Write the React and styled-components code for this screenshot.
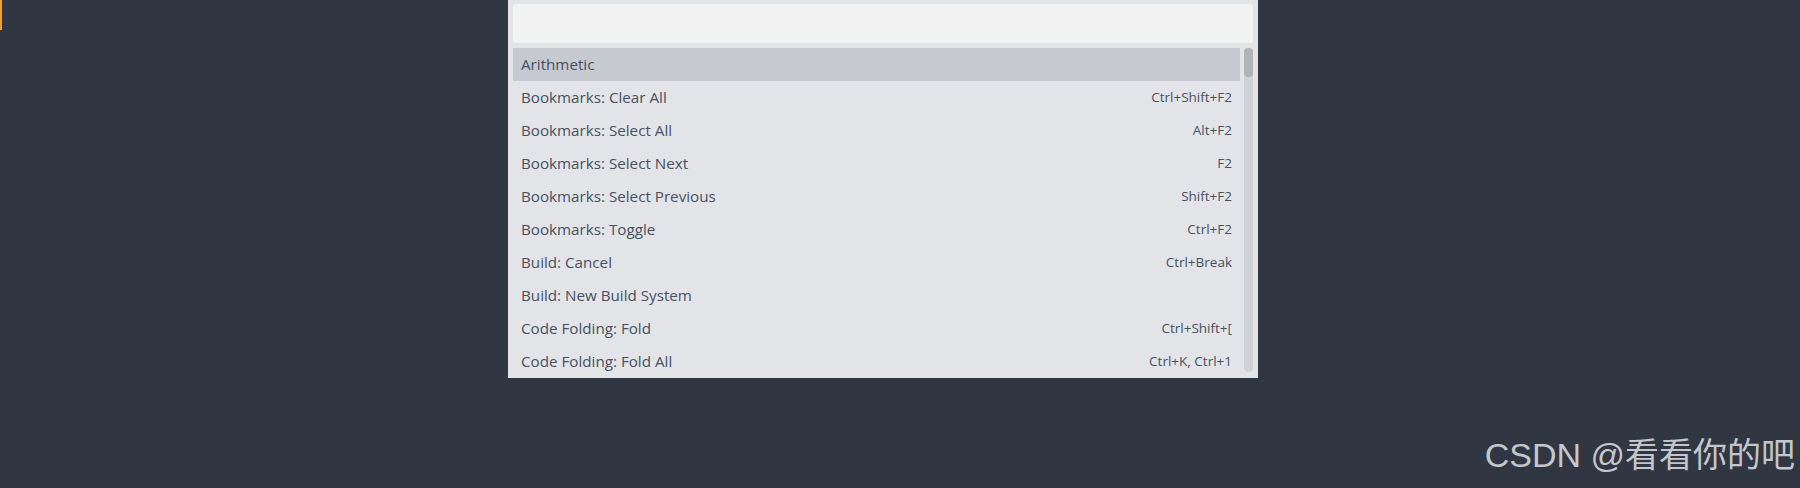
import React from 'react';
import styled, { createGlobalStyle } from 'styled-components';

const GlobalStyle = createGlobalStyle`
  html, body {
    margin: 0;
    padding: 0;
    background: #303742;
    height: 488px;
    overflow: hidden;
  }
`;

const Screen = styled.div`
  position: relative;
  width: 1800px;
  height: 488px;
  background: #303742;
  display: flex;
  justify-content: center;
  align-items: flex-start;
`;

const Caret = styled.div`
  position: absolute;
  left: 0;
  top: 0;
  width: 2px;
  height: 30px;
  background: #f0a030;
`;

const Palette = styled.div`
  width: 750px;
  margin-left: -34px;
  background: #e3e4e7;
  padding: 4px 5px 0 5px;
  box-sizing: border-box;
  display: flex;
  flex-direction: column;
  gap: 5px;
`;

const Input = styled.div`
  height: 39px;
  background: #f2f2f2;
  border-radius: 3px;
`;

const Body = styled.div`
  display: flex;
  gap: 4px;
`;

const List = styled.ul`
  flex: 1;
  margin: 0;
  padding: 0;
  list-style: none;
`;

const Row = styled.li`
  height: 33px;
  box-sizing: border-box;
  display: flex;
  align-items: center;
  justify-content: space-between;
  padding: 0 8px 2px 8px;
  background: ${p => (p.$selected ? '#c6c9d0' : 'transparent')};
  font-family: 'Open Sans', 'Noto Sans', sans-serif;
  color: #465261;
`;

const Label = styled.span`
  font-size: 15.2px;
`;

const Keys = styled.span`
  font-size: 13.5px;
`;

const Track = styled.div`
  width: 9px;
  height: 324px;
  background: #cfd2d6;
  border-radius: 4px;
  display: flex;
  flex-direction: column;
`;

const Thumb = styled.div`
  height: 29px;
  background: #b1b4b9;
  border-radius: 4px;
`;

const Watermark = styled.div`
  position: absolute;
  right: 5px;
  bottom: 11px;
  font-family: 'Liberation Sans', 'Noto Sans CJK SC', sans-serif;
  font-size: 34px;
  color: #c3c6ca;
`;

const commands = [
  ['Arithmetic', ''],
  ['Bookmarks: Clear All', 'Ctrl+Shift+F2'],
  ['Bookmarks: Select All', 'Alt+F2'],
  ['Bookmarks: Select Next', 'F2'],
  ['Bookmarks: Select Previous', 'Shift+F2'],
  ['Bookmarks: Toggle', 'Ctrl+F2'],
  ['Build: Cancel', 'Ctrl+Break'],
  ['Build: New Build System', ''],
  ['Code Folding: Fold', 'Ctrl+Shift+['],
  ['Code Folding: Fold All', 'Ctrl+K, Ctrl+1'],
];

export default function App() {
  return (
    <>
      <GlobalStyle />
      <Screen>
        <Caret />
        <Palette>
          <Input />
          <Body>
            <List>
              {commands.map(([name, keys], i) => (
                <Row key={name} $selected={i === 0}>
                  <Label>{name}</Label>
                  <Keys>{keys}</Keys>
                </Row>
              ))}
            </List>
            <Track>
              <Thumb />
            </Track>
          </Body>
        </Palette>
        <Watermark>CSDN @看看你的吧</Watermark>
      </Screen>
    </>
  );
}
